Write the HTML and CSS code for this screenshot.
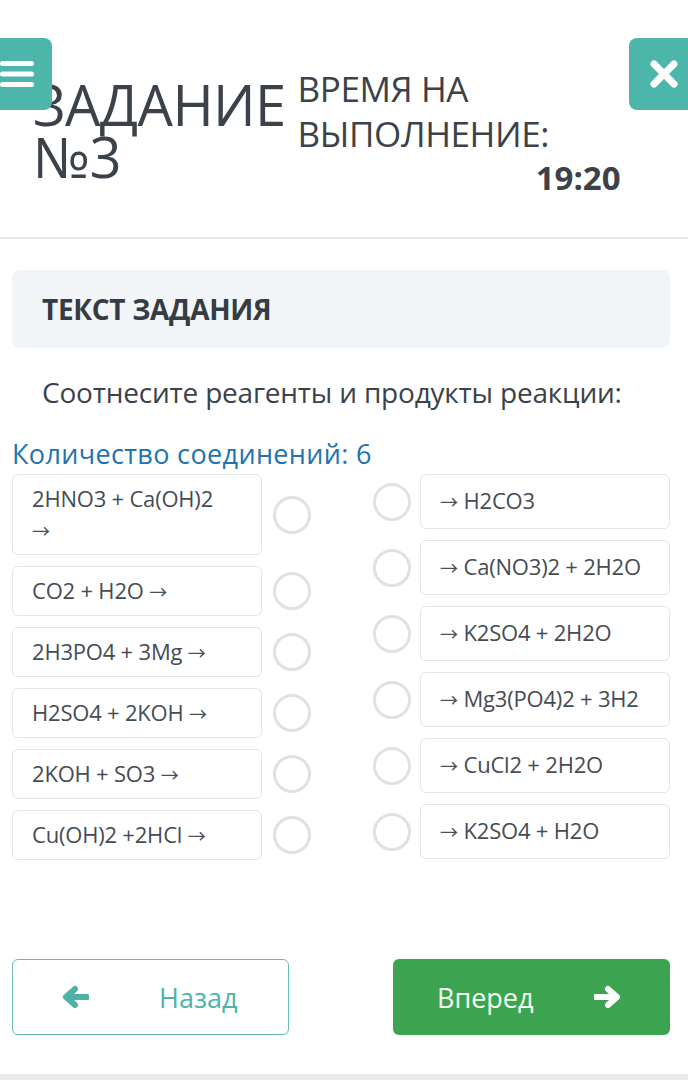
FILE: index.html
```html
<!DOCTYPE html>
<html lang="ru">
<head>
<meta charset="utf-8">
<link rel="stylesheet" href="styles.css">
</head>
<body>
<div class="page">
  <header class="header">
    <button class="side-btn menu-btn" aria-label="menu">
      <svg width="36" height="30" viewBox="0 0 36 30"><rect x="0" y="2" width="34" height="5" rx="2.5" fill="#fff"/><rect x="0" y="12.5" width="34" height="5" rx="2.5" fill="#fff"/><rect x="0" y="23" width="34" height="5" rx="2.5" fill="#fff"/></svg>
    </button>
    <h1 class="title">ЗАДАНИЕ<br>№3</h1>
    <div class="timer">
      <div class="timer-label">ВРЕМЯ НА<br>ВЫПОЛНЕНИЕ:</div>
      <div class="timer-value">19:20</div>
    </div>
    <button class="side-btn close-btn" aria-label="close">
      <svg width="30" height="30" viewBox="0 0 30 30"><path d="M5 5 L25 25 M25 5 L5 25" stroke="#fff" stroke-width="7" stroke-linecap="round"/></svg>
    </button>
  </header>
  <div class="divider"></div>
  <section class="task">
    <div class="task-head">ТЕКСТ ЗАДАНИЯ</div>
    <p class="task-text">Соотнесите реагенты и продукты реакции:</p>
    <div class="count">Количество соединений: 6</div>
    <div class="match">
      <div class="col left">
        <div class="row r1"><div class="item">2HNO3 + Ca(OH)2<br><span class="arr">→</span></div><span class="dot"></span></div>
        <div class="row"><div class="item">CO2 + H2O <span class="arr">→</span></div><span class="dot"></span></div>
        <div class="row"><div class="item">2H3PO4 + 3Mg <span class="arr">→</span></div><span class="dot"></span></div>
        <div class="row"><div class="item">H2SO4 + 2KOH <span class="arr">→</span></div><span class="dot"></span></div>
        <div class="row"><div class="item">2KOH + SO3 <span class="arr">→</span></div><span class="dot"></span></div>
        <div class="row"><div class="item">Cu(OH)2 +2HCl <span class="arr">→</span></div><span class="dot"></span></div>
      </div>
      <div class="col right">
        <div class="row"><span class="dot"></span><div class="item"><span class="arr">→</span> H2CO3</div></div>
        <div class="row"><span class="dot"></span><div class="item"><span class="arr">→</span> Ca(NO3)2 + 2H2O</div></div>
        <div class="row"><span class="dot"></span><div class="item"><span class="arr">→</span> K2SO4 + 2H2O</div></div>
        <div class="row"><span class="dot"></span><div class="item"><span class="arr">→</span> Mg3(PO4)2 + 3H2</div></div>
        <div class="row"><span class="dot"></span><div class="item"><span class="arr">→</span> CuCl2 + 2H2O</div></div>
        <div class="row"><span class="dot"></span><div class="item"><span class="arr">→</span> K2SO4 + H2O</div></div>
      </div>
    </div>
  </section>
  <nav class="nav">
    <button class="nav-btn back">
      <svg width="28" height="24" viewBox="0 0 28 24"><path d="M26 12 H8 M14 4 L5 12 L14 20" stroke="#4db3a8" stroke-width="6" fill="none" stroke-linecap="round" stroke-linejoin="round"/></svg>
      <span>Назад</span>
    </button>
    <button class="nav-btn next">
      <span>Вперед</span>
      <svg width="28" height="24" viewBox="0 0 28 24"><path d="M2 12 H20 M14 4 L23 12 L14 20" stroke="#fff" stroke-width="6" fill="none" stroke-linecap="round" stroke-linejoin="round"/></svg>
    </button>
  </nav>
  <div class="bottom-strip"></div>
</div>
</body>
</html>
```

FILE: styles.css
```css
* { box-sizing: border-box; }
html, body { margin: 0; padding: 0; background: #fff; }
body { font-family: "Open Sans", "Noto Sans", sans-serif; color: #3b4249; }
.page { width: 688px; height: 1080px; position: relative; overflow: hidden; }

.header { position: relative; height: 237px; display: flex; align-items: flex-start; }
.side-btn {
  position: absolute; top: 38px; width: 60px; height: 72px;
  background: #4db6ab; border: none; padding: 0;
  display: flex; align-items: center; justify-content: center;
  z-index: 2;
}
.menu-btn { left: -8px; border-radius: 0 8px 8px 0; justify-content: flex-end; padding-right: 16px; }
.close-btn { right: -8px; left: 629px; width: 67px; border-radius: 8px 0 0 8px; justify-content: flex-start; padding-left: 20px; }

.title {
  margin: 0; padding: 78px 0 0 33px;
  font-size: 56px; font-weight: 400; line-height: 52px; letter-spacing: -0.6px;
  color: #3b4249;
}
.timer { padding: 66px 0 0 12px; width: 345px; }
.timer-label { font-size: 35px; line-height: 45px; font-weight: 400; letter-spacing: -0.4px; }
.timer-value { text-align: right; font-weight: 700; font-size: 33px; line-height: 44px; margin-top: 0; padding-right: 10px; }

.divider { height: 2px; background: #e6e9eb; }

.task { padding: 31px 18px 0 12px; }
.task-head {
  background: #f2f5f7; border-radius: 8px; height: 78px;
  display: flex; align-items: center; padding-left: 30px;
  font-weight: 700; font-size: 28px; letter-spacing: -0.3px; color: #353c43;
}
.task-text { margin: 24px 0 0 30px; font-size: 28px; line-height: 40px; letter-spacing: -0.2px; color: #3b4249; }
.count { margin-top: 24px; font-size: 27px; line-height: 36px; color: #2273ae; letter-spacing: 0.35px; }

.match { display: flex; justify-content: space-between; margin-top: 2px; }
.col { display: flex; flex-direction: column; gap: 11px; }
.left { width: 316px; }
.right { width: 297px; }
.row { display: flex; align-items: center; }
.item {
  border: 1px solid #e2e6e8; border-radius: 6px; background: #fff;
  font-size: 22px; line-height: 31px; color: #454c53; letter-spacing: -0.2px;
  display: block; white-space: nowrap;
}
.arr { font-family: "Noto Sans CJK SC", "DejaVu Sans", sans-serif; font-size: 18px; line-height: 0; color: #4a5157; letter-spacing: 0; }
.left .item { width: 250px; height: 50px; padding: 8px 19px 0; }
.left .r1 .item { height: 81px; padding-top: 8px; }
.left .r1 { align-items: flex-start; }
.left .r1 .dot { margin-top: 22px; }
.left .dot { margin-left: 11px; }
.right .item { width: 250px; height: 55px; padding: 10px 19px 0; margin-left: 9px; }
.dot { width: 38px; height: 38px; border-radius: 50%; border: 3px solid #dde2e5; flex: none; background: #fff; }

.nav { position: absolute; left: 12px; right: 18px; top: 959px; display: flex; justify-content: space-between; }
.nav-btn {
  width: 277px; height: 76px; border-radius: 6px;
  display: flex; align-items: center; font-family: "Open Sans", sans-serif; font-size: 27px;
}
.back { background: #fff; border: 1px solid #66bcb2; color: #4db3a8; padding-left: 48px; }
.back span { margin-left: 70px; }
.next { background: #3ca450; border: none; color: #f4fff4; padding-left: 44px; }
.next span { margin-right: 60px; }
.bottom-strip { position: absolute; left: 0; right: 0; bottom: 0; height: 6px; background: #e8eaec; }
```
